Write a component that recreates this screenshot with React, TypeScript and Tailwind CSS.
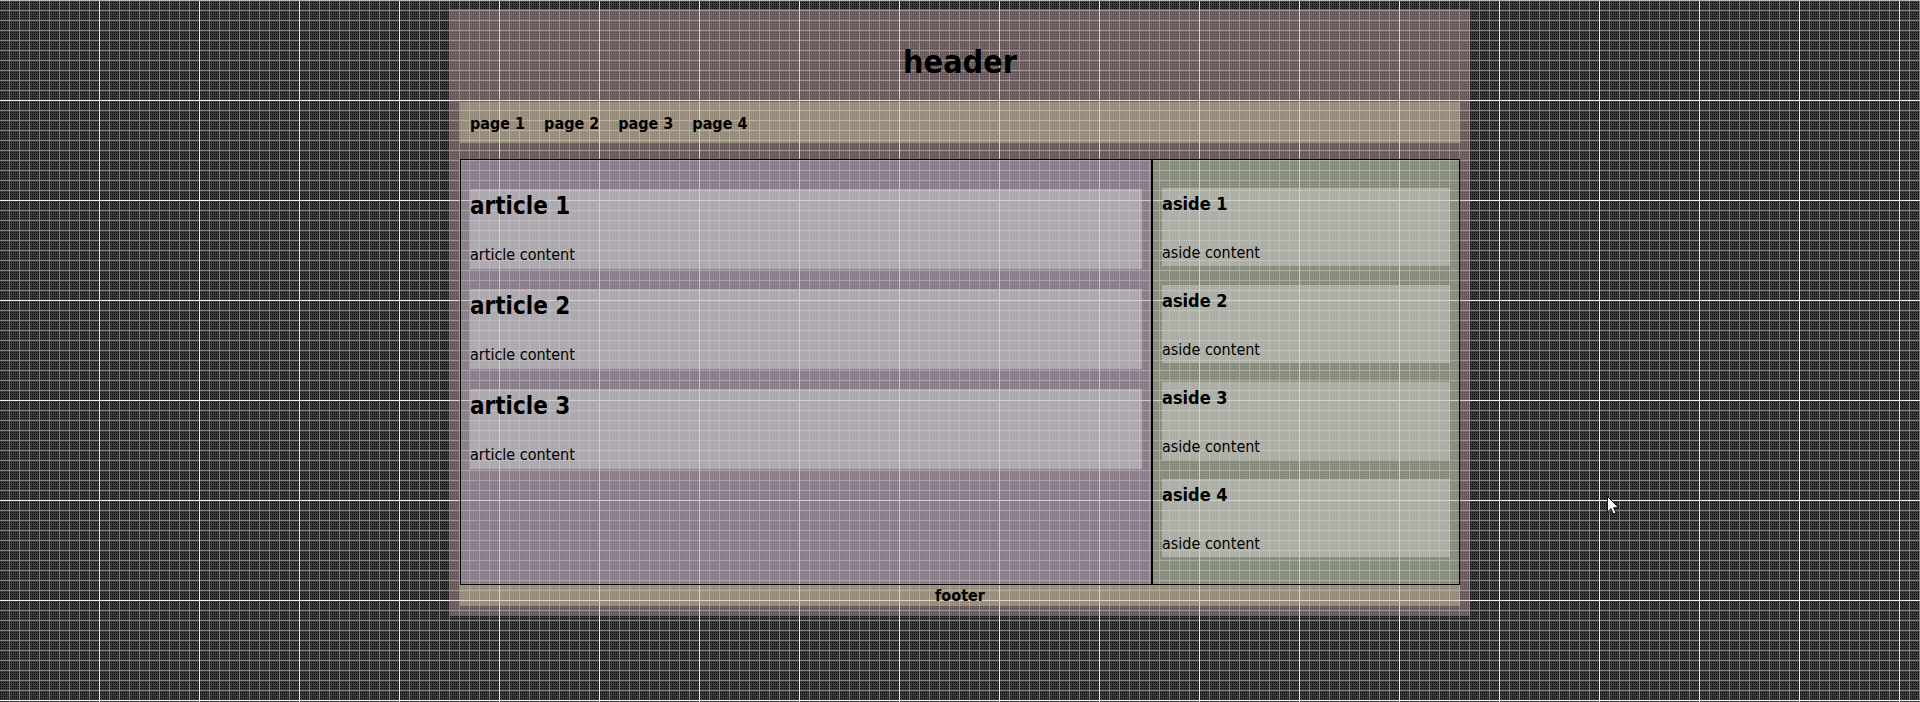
const articles = ["article 1", "article 2", "article 3"];
const asides = ["aside 1", "aside 2", "aside 3", "aside 4"];
const pages = ["page 1", "page 2", "page 3", "page 4"];

function GridPaper() {
  return (
    <svg className="absolute inset-0 h-full w-full" aria-hidden="true" shapeRendering="crispEdges">
      <defs>
        <pattern id="dots" width="2" height="2" patternUnits="userSpaceOnUse">
          <rect width="2" height="2" fill="#3c3c3c" />
          <rect x="0" y="0" width="1" height="1" fill="#0c0c0c" />
        </pattern>
        <pattern id="minor" width="10" height="10" patternUnits="userSpaceOnUse">
          <rect x="9" width="1" height="10" fill="#808080" />
          <rect width="10" height="1" fill="#808080" />
        </pattern>
        <pattern id="major" width="100" height="100" patternUnits="userSpaceOnUse">
          <rect x="99" width="1" height="100" fill="#f0f0f0" />
          <rect width="100" height="1" fill="#f0f0f0" />
        </pattern>
      </defs>
      <rect width="100%" height="100%" fill="url(#dots)" />
      <rect width="100%" height="100%" fill="url(#minor)" />
      <rect width="100%" height="100%" fill="url(#major)" />
      <rect width="100%" height="1" fill="#b4bcb4" />
    </svg>
  );
}

function Pointer() {
  return (
    <svg className="absolute left-[1607px] top-[496px] h-[19px] w-3" viewBox="0 0 12 19" aria-hidden="true">
      <path d="M.5 .5v15.5l3.5-3.4 2.4 5.4 2.6-1.1-2.4-5.2h4.9z" fill="#fff" stroke="#111122" />
    </svg>
  );
}

export default function App() {
  return (
    <div className="relative min-h-screen overflow-hidden font-['DejaVu_Sans_Condensed','DejaVu_Sans',sans-serif] text-base leading-[21px] text-black">
      <GridPaper />
      <div className="relative mx-auto mt-[9px] max-w-[1020px] bg-[#c8a5a566] px-[10px] pb-[10px]">
        <header>
          <h1 className="pt-[33px] pb-5 text-center text-[32px] leading-10 font-bold">header</h1>
          <nav className="bg-[#dcd7b066] px-[10px] pt-[11px] pb-[9px]">
            <ul className="flex gap-[19px] font-bold">
              {pages.map((page) => (
                <li key={page}>
                  <a href="#">{page}</a>
                </li>
              ))}
            </ul>
          </nav>
        </header>
        <main className="mt-4 flex">
          <section className="flex flex-1 flex-col gap-5 border border-black bg-[#b9b4d266] px-[9px] pt-[29px] pb-5">
            {articles.map((title) => (
              <article key={title} className="bg-[#d2d4d280]">
                <h2 className="pt-[3px] text-2xl leading-7 font-bold">{title}</h2>
                <p className="pt-6 pb-1">article content</p>
              </article>
            ))}
          </section>
          <aside className="flex w-[308px] flex-col gap-[19px] border border-black bg-[#b4d7af66] px-[9px] pt-7 pb-[27px]">
            {asides.map((title) => (
              <section key={title} className="bg-[#d2d2d280]">
                <h3 className="pt-1 text-lg leading-6 font-bold">{title}</h3>
                <p className="pt-[26px] pb-[3px]">aside content</p>
              </section>
            ))}
          </aside>
        </main>
        <footer className="bg-[#dcd7b066] text-center font-bold">footer</footer>
      </div>
      <Pointer />
    </div>
  );
}
